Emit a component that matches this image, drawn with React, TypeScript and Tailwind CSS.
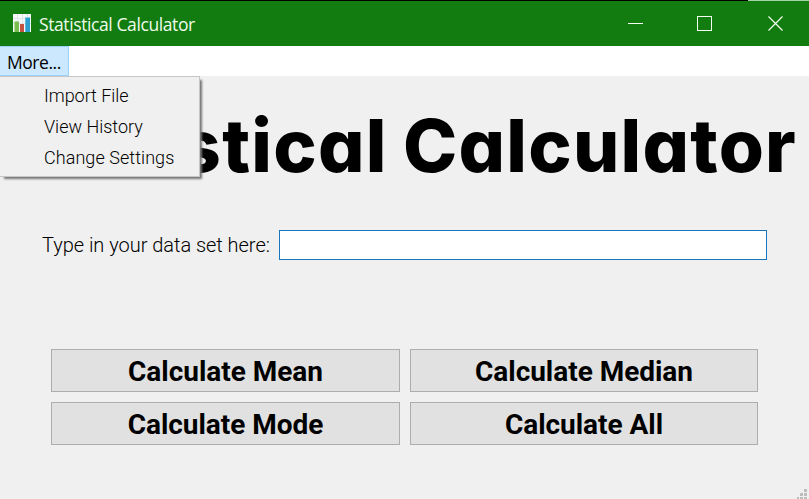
import React from "react";

const menuItems = [
  { label: "Import File", spacing: "tracking-[-0.05px]" },
  { label: "View History", spacing: "tracking-[0px]" },
  { label: "Change Settings", spacing: "tracking-[0.06px]" },
];

const actions = ["Calculate Mean", "Calculate Median", "Calculate Mode", "Calculate All"];

function ChartIcon() {
  return (
    <svg className="-mt-px ml-[13px] h-[18px] w-[18px] shrink-0" viewBox="0 0 18 18">
      <rect width="18" height="18" fill="#f6f9f7" />
      <path d="M0 4.5H18M0 9.5H18M4.5 0V18M9.5 0V18M14.5 0V18" stroke="#dfe7e8" />
      <rect x="1.5" y="7.5" width="4.5" height="10.5" fill="#76bd4b" />
      <rect x="7" y="10" width="4" height="8" fill="#c65342" />
      <rect x="12.3" y="3.5" width="4.7" height="14.5" fill="#2b9fd0" />
    </svg>
  );
}

function TitleBar() {
  return (
    <header className="flex h-[46px] flex-col bg-[#127c10]">
      <div className="flex h-px">
        <div className="w-[748px] bg-black" />
        <div className="flex-1 bg-[#a5d3a8]" />
      </div>
      <div className="flex flex-1 items-center">
        <ChartIcon />
        <span className="ml-2 mt-px whitespace-nowrap font-['Open_Sans',sans-serif] text-[17.5px] leading-6 tracking-[-0.4px] text-[#eefbea]">
          Statistical Calculator
        </span>
        <svg className="ml-auto mr-6 h-[15px] w-[158px]" viewBox="0 0 158 15" fill="none" stroke="#f4fff2">
          <path d="M1 7.5H16" />
          <rect x="70.5" y="0.5" width="14" height="14" />
          <path d="M141.5 0.5L155.5 14.5M155.5 0.5L141.5 14.5" strokeWidth="1.2" />
        </svg>
      </div>
    </header>
  );
}

function MoreMenu() {
  return (
    <div className="absolute left-0 top-[30px] z-10 flex h-[101px] w-[200px] flex-col border border-l-0 border-[#c6c6c6] bg-[#f0f0f0] pl-11 pt-[3px] shadow-[3px_3px_2px_-1px_#777]">
      {menuItems.map((item) => (
        <div
          key={item.label}
          className={`flex h-[31px] items-center whitespace-nowrap font-[Roboto,sans-serif] text-[18px] font-light text-black ${item.spacing}`}
        >
          {item.label}
        </div>
      ))}
    </div>
  );
}

function ResizeGrip() {
  return (
    <svg className="absolute bottom-0 right-[2px] h-[10px] w-[10px]" viewBox="0 0 10 10" fill="#bdbdbd" shapeRendering="crispEdges">
      <path d="M7 0h3v3h-3zM3 4h3v3h-3zM7 4h3v3h-3zM0 8h2v2h-2zM3 8h3v2h-3zM7 8h3v2h-3z" />
    </svg>
  );
}

export default function App() {
  return (
    <div className="relative flex h-[499px] w-[809px] flex-col overflow-hidden bg-[#f0f0f0] text-black">
      <TitleBar />
      <nav className="relative h-[30px] bg-white">
        <div className="flex h-[30px] w-[69px] items-center border border-l-0 border-[#99d1ff] bg-[#cce8ff] pl-[7px] pt-px font-['Open_Sans',sans-serif] text-[17.5px] leading-6 tracking-[-0.45px]">
          More...
        </div>
        <MoreMenu />
      </nav>
      <main className="flex flex-1 flex-col">
        <h1 className="flex h-[154px] justify-end whitespace-nowrap pr-[12px] pt-[33px] font-[Inter,sans-serif] text-[73px] font-extrabold leading-[74px] tracking-[1.25px] [font-feature-settings:'cv11'] [word-spacing:-2px]">
          Statistical Calculator
        </h1>
        <div className="flex h-[30px] items-center pl-[42px]">
          <label htmlFor="dataset" className="w-[237px] whitespace-nowrap font-[Roboto,sans-serif] text-[20px] font-light tracking-[-0.03px]">
            Type in your data set here:
          </label>
          <input id="dataset" className="h-[30px] w-[488px] border border-[#1976bd] bg-white px-1 outline-none" />
        </div>
        <div className="ml-[51px] mt-[89px] grid w-[707px] grid-cols-[349px_348px] gap-[10px]">
          {actions.map((label) => (
            <button
              key={label}
              className="flex h-[43px] items-center justify-center border border-[#adadad] bg-[#e1e1e1] pt-[2px] font-[Roboto,sans-serif] text-[28px] font-bold leading-8 tracking-[-0.03px]"
            >
              {label}
            </button>
          ))}
        </div>
      </main>
      <ResizeGrip />
    </div>
  );
}
